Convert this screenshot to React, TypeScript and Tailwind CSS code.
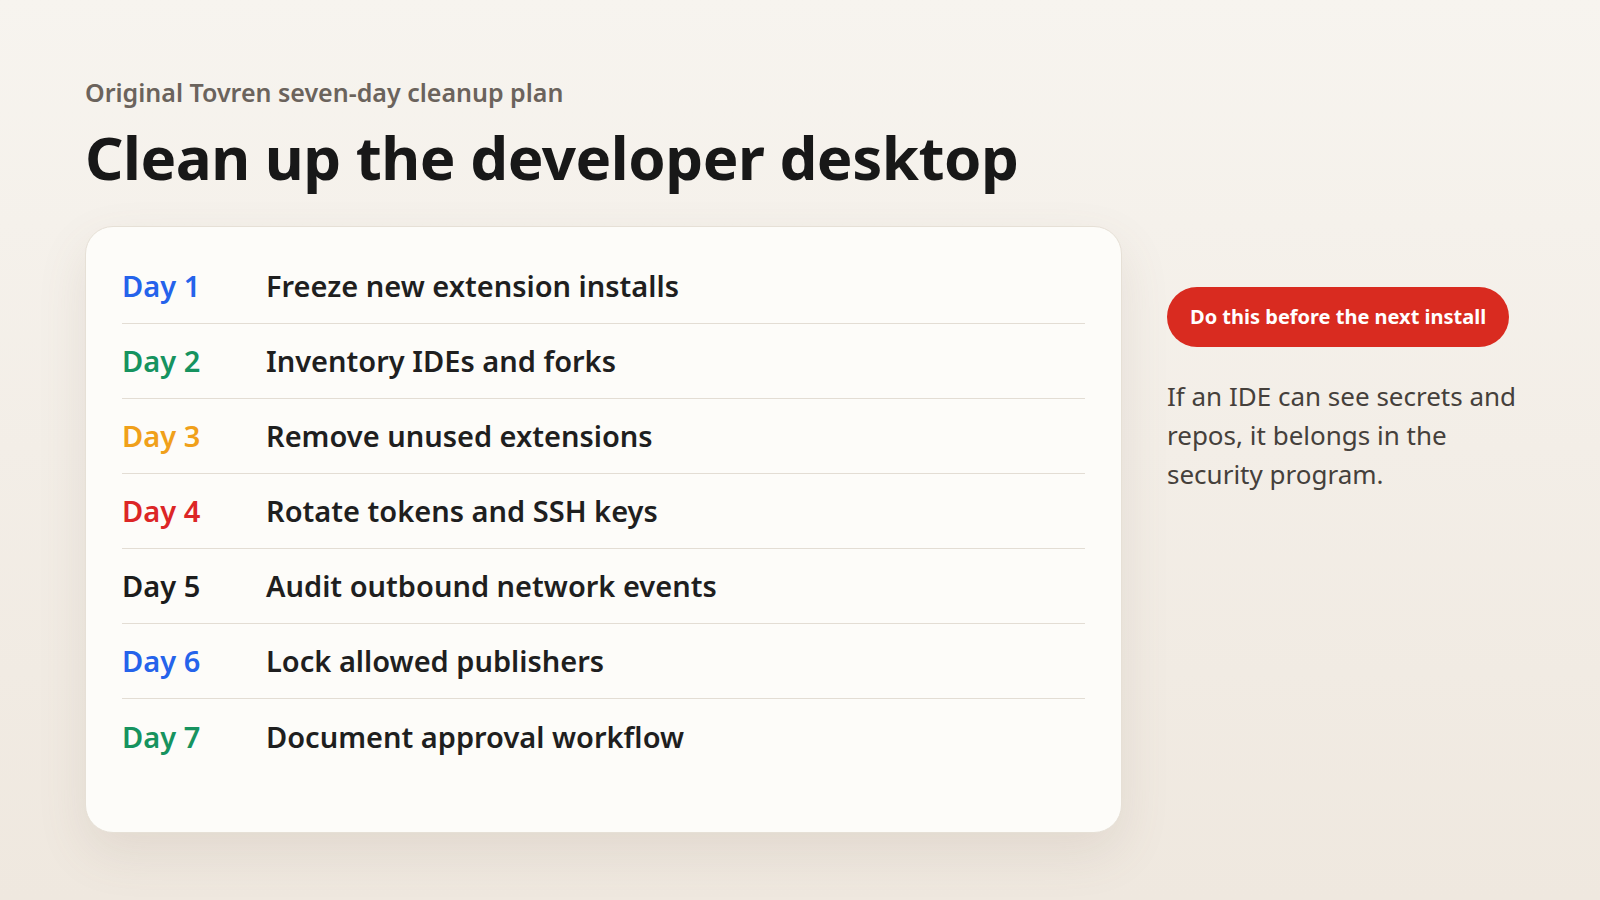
const days = [
  { d: "Day 1", t: "Freeze new extension installs", c: "text-[#2563eb]" },
  { d: "Day 2", t: "Inventory IDEs and forks", c: "text-[#16935f]" },
  { d: "Day 3", t: "Remove unused extensions", c: "text-[#f0a01a]" },
  { d: "Day 4", t: "Rotate tokens and SSH keys", c: "text-[#dc2626]" },
  { d: "Day 5", t: "Audit outbound network events", c: "text-[#1c1c1c]" },
  { d: "Day 6", t: "Lock allowed publishers", c: "text-[#2563eb]" },
  { d: "Day 7", t: "Document approval workflow", c: "text-[#16935f]" },
];

export default function App() {
  return (
    <div
      className="w-[1600px] h-[900px] overflow-hidden bg-gradient-to-b from-[#f7f4ef] to-[#efe8df] pl-[85px] pt-[74px]"
      style={{ fontFamily: '"Noto Sans", "Open Sans", sans-serif' }}
    >
      <div className="text-[25px] font-semibold text-[#6b635c] leading-[36px]">Original Tovren seven-day cleanup plan</div>
      <h1 className="mt-[12px] text-[60px] font-bold text-[#181818] leading-[70px] tracking-[-0.5px]">Clean up the developer desktop</h1>
      <div className="mt-[34px] flex items-start">
        <div className="w-[1037px] h-[607px] rounded-[28px] bg-[#fdfcf9] border border-[#e6e0d6] shadow-[0_20px_50px_rgba(120,100,80,0.12)] px-[36px] pt-[22px]">
          {days.map((r, i) => (
            <div
              key={r.d}
              className={`flex items-center h-[75px] ${i < days.length - 1 ? "border-b border-[#e3ddd4]" : ""}`}
            >
              <div className={`w-[144px] text-[29px] font-semibold ${r.c}`}>{r.d}</div>
              <div className="text-[29px] font-semibold text-[#1f1f1f]">{r.t}</div>
            </div>
          ))}
        </div>
        <div className="ml-[45px] mt-[61px] w-[360px]">
          <div className="inline-flex items-center h-[60px] px-[23px] rounded-full bg-[#d92b20] text-white text-[20px] font-bold">
            Do this before the next install
          </div>
          <p className="mt-[30px] text-[26px] leading-[39px] text-[#45403b]">
            If an IDE can see secrets and repos, it belongs in the security program.
          </p>
        </div>
      </div>
    </div>
  );
}
